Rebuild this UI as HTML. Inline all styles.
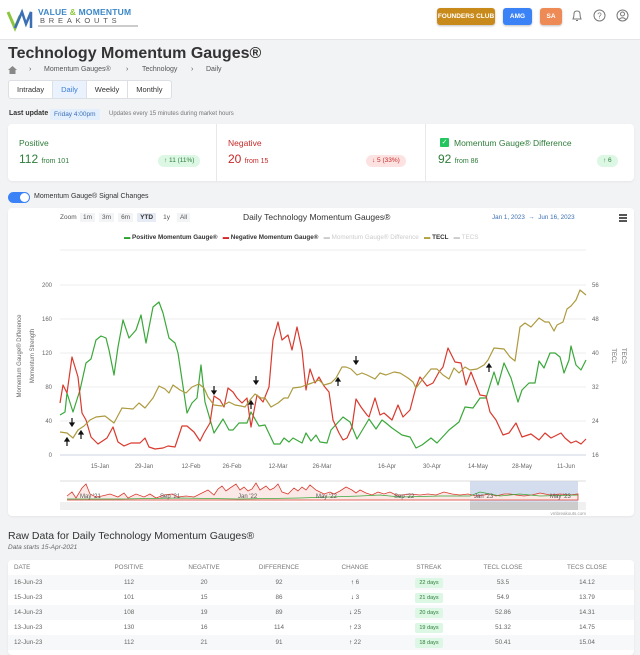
<!DOCTYPE html>
<html><head><meta charset="utf-8"><style>
*{box-sizing:border-box;margin:0;padding:0}
body{width:640px;height:648px;overflow:hidden;background:#f2f3f5;font-family:"Liberation Sans",sans-serif;color:#333;position:relative}
.a{position:absolute;white-space:nowrap}
.hdr{left:0;top:0;width:640px;height:40px;background:#fff;border-bottom:1px solid #e3e5e8}
.btn{top:8px;height:17px;border-radius:3px;color:#fff;font-size:6.5px;font-weight:bold;text-align:center;line-height:17px;box-shadow:0 1px 2px rgba(0,0,0,.25)}
.card{background:#fff;border-radius:4px;box-shadow:0 1px 2px rgba(0,0,0,.06)}
.tabs{left:8px;top:80px;height:19px;background:#fff;border:1px solid #dcdfe3;border-radius:3px;display:flex;font-size:7.5px}
.tabs div{padding:0 8px;line-height:17px;border-right:1px solid #dcdfe3}
.pill{border-radius:8px;font-size:6.5px;padding:0 6px;line-height:12px;height:12px}
table{border-collapse:collapse;width:626px;font-size:6.3px;color:#666}
td,th{text-align:center;height:15px;font-weight:normal}
th{color:#777;height:15px}
tr.alt td{background:#f7f8f9}
.sk{background:#dcf7e3;color:#2e7d3a;border-radius:2px;padding:2px 4px;font-size:5.5px}
</style></head><body>
<div class="a hdr"></div>
<svg class="a" style="left:6px;top:6px" width="30" height="26" viewBox="0 0 30 26"><path d="M2 6 L9 22 L14 10" stroke="#8cc63f" stroke-width="3" fill="none"/><path d="M9 22 L16 6 L20 18 L25 6 L25 22" stroke="#3b6fb6" stroke-width="2.5" fill="none"/></svg>
<div class="a" style="left:38px;top:7px;font-size:8.5px;color:#3b87c8;font-weight:bold;letter-spacing:.2px">VALUE <span style="color:#8cc63f">&amp;</span> MOMENTUM</div>
<div class="a" style="left:40px;top:16px;font-size:7.5px;color:#555;letter-spacing:3.8px">BREAKOUTS</div>
<div class="a" style="left:38px;top:25px;width:100px;height:2px;background:#ccc"></div>
<div class="a btn" style="left:437px;width:58px;background:#c98a1c">FOUNDERS CLUB</div>
<div class="a btn" style="left:503px;width:29px;background:#3b82f6">AMG</div>
<div class="a btn" style="left:540px;width:22px;background:#ee8a56">SA</div>
<svg class="a" style="left:571px;top:9px" width="12" height="13" viewBox="0 0 12 13"><path d="M2 10 Q3 8 3 5 Q3 2 6 2 Q9 2 9 5 Q9 8 10 10 Z M5 11.5 H7" stroke="#777" fill="none"/></svg>
<svg class="a" style="left:593px;top:9px" width="13" height="13"><circle cx="6.5" cy="6.5" r="5.5" stroke="#777" fill="none"/><text x="6.5" y="9.5" font-size="8" text-anchor="middle" fill="#777" font-family="Liberation Sans">?</text></svg>
<svg class="a" style="left:616px;top:9px" width="13" height="13"><circle cx="6.5" cy="6.5" r="5.5" stroke="#777" fill="none"/><circle cx="6.5" cy="5" r="2" stroke="#777" fill="none"/><path d="M3 10.5 Q6.5 7 10 10.5" stroke="#777" fill="none"/></svg>

<div class="a" style="left:8px;top:45px;font-size:16px;font-weight:bold;color:#333">Technology Momentum Gauges®</div>
<svg class="a" style="left:8px;top:66px" width="9" height="8"><path d="M0 4 L4.5 0 L9 4 H7.5 V8 H1.5 V4Z" fill="#888"/></svg>
<div class="a" style="left:29px;top:66px;font-size:7px;color:#555">›</div>
<div class="a" style="left:44px;top:66px;font-size:7px;color:#555">Momentum Gauges®</div>
<div class="a" style="left:126px;top:66px;font-size:7px;color:#555">›</div>
<div class="a" style="left:142px;top:66px;font-size:7px;color:#555">Technology</div>
<div class="a" style="left:191px;top:66px;font-size:7px;color:#555">›</div>
<div class="a" style="left:206px;top:66px;font-size:7px;color:#555">Daily</div>
<div class="a tabs"><div>Intraday</div><div style="background:#eaf2fd;color:#3b7ddd">Daily</div><div>Weekly</div><div style="border:none">Monthly</div></div>
<div class="a" style="left:9px;top:110px;font-size:7px;font-weight:bold;color:#333">Last update</div>
<div class="a" style="left:50px;top:109px;font-size:6.5px;background:#e3effd;color:#3b6fb6;padding:0 4px;line-height:11px;border-radius:2px">Friday 4:00pm</div>
<div class="a" style="left:109px;top:111px;font-size:6px;color:#777">Updates every 15 minutes during market hours</div>

<div class="a card" style="left:8px;top:124px;width:626px;height:57px"></div>
<div class="a" style="left:216px;top:124px;width:1px;height:57px;background:#e6e8eb"></div>
<div class="a" style="left:425px;top:124px;width:1px;height:57px;background:#e6e8eb"></div>
<div class="a" style="left:19px;top:138px;font-size:8.5px;color:#2e7d3a">Positive</div>
<div class="a" style="left:19px;top:152px;font-size:12px;color:#2e7d3a">112 <span style="font-size:7px">from 101</span></div>
<div class="a pill" style="left:158px;top:155px;background:#dcf7e3;color:#2e7d3a">↑ 11 (11%)</div>
<div class="a" style="left:228px;top:138px;font-size:8.5px;color:#c62828">Negative</div>
<div class="a" style="left:228px;top:152px;font-size:12px;color:#c62828">20 <span style="font-size:7px">from 15</span></div>
<div class="a pill" style="left:366px;top:155px;background:#fde2e2;color:#c62828">↓ 5 (33%)</div>
<div class="a" style="left:440px;top:138px;width:9px;height:9px;background:#22c55e;border-radius:1px;color:#fff;font-size:7px;line-height:9px;text-align:center">✓</div>
<div class="a" style="left:454px;top:138px;font-size:8.5px;color:#2e7d3a">Momentum Gauge® Difference</div>
<div class="a" style="left:438px;top:152px;font-size:12px;color:#2e7d3a">92 <span style="font-size:7px">from 86</span></div>
<div class="a pill" style="left:597px;top:155px;background:#dcf7e3;color:#2e7d3a">↑ 6</div>

<div class="a" style="left:8px;top:192px;width:22px;height:11px;background:#3b82f6;border-radius:6px"></div>
<div class="a" style="left:20px;top:193px;width:9px;height:9px;background:#fff;border-radius:50%"></div>
<div class="a" style="left:34px;top:193px;font-size:7px;color:#333">Momentum Gauge® Signal Changes</div>

<div class="a card" style="left:8px;top:208px;width:626px;height:308px"></div>
<div class="a" style="left:60px;top:214px;font-size:6.5px;color:#555">Zoom</div>
<div class="a" style="left:80px;top:213px;font-size:6.5px;color:#555;display:flex;gap:4px">
<span style="background:#f3f4f6;padding:1px 3px">1m</span><span style="background:#f3f4f6;padding:1px 3px">3m</span><span style="background:#f3f4f6;padding:1px 3px">6m</span><span style="background:#e6ebf5;padding:1px 3px;font-weight:bold;color:#333">YTD</span><span style="padding:1px 3px">1y</span><span style="background:#f3f4f6;padding:1px 3px">All</span></div>
<div class="a" style="left:243px;top:212px;font-size:8.5px;color:#333">Daily Technology Momentum Gauges®</div>
<div class="a" style="left:492px;top:214px;font-size:6.3px;color:#3b6fb6">Jan 1, 2023 &nbsp;→&nbsp; Jun 16, 2023</div>
<div class="a" style="left:619px;top:214px;width:8px;height:1.5px;background:#555;box-shadow:0 3px 0 #555,0 6px 0 #555"></div>
<div class="a" style="left:124px;top:234px;font-size:6.3px;color:#333;font-weight:bold">
<span style="color:#2ca02c">▬</span> Positive Momentum Gauge® &nbsp; <span style="color:#d62728">▬</span> Negative Momentum Gauge® &nbsp; <span style="color:#ccc;font-weight:normal">▬ Momentum Gauge® Difference</span> &nbsp; <span style="color:#b0a040">▬</span> TECL &nbsp; <span style="color:#ccc;font-weight:normal">▬ TECS</span></div>

<svg class="a" style="left:8px;top:240px" width="626" height="276" viewBox="8 240 626 276" font-family="Liberation Sans" font-size="6" fill="#666">
<g stroke="#e6e6e6" stroke-width="0.8"><line x1="60" x2="586" y1="250" y2="250"/><line x1="60" x2="586" y1="285" y2="285"/><line x1="60" x2="586" y1="319" y2="319"/><line x1="60" x2="586" y1="353" y2="353"/><line x1="60" x2="586" y1="387" y2="387"/><line x1="60" x2="586" y1="421" y2="421"/></g>
<line x1="60" x2="586" y1="455" y2="455" stroke="#cdd3e0"/>
<g text-anchor="end"><text x="52" y="287">200</text><text x="52" y="321">160</text><text x="52" y="355">120</text><text x="52" y="389">80</text><text x="52" y="423">40</text><text x="52" y="457">0</text></g>
<g><text x="592" y="287">56</text><text x="592" y="321">48</text><text x="592" y="355">40</text><text x="592" y="389">32</text><text x="592" y="423">24</text><text x="592" y="457">16</text></g>
<text transform="translate(21 356) rotate(-90)" text-anchor="middle">Momentum Gauge® Difference</text>
<text transform="translate(34 356) rotate(-90)" text-anchor="middle">Momentum Strength</text>
<text transform="translate(612 356) rotate(90)" text-anchor="middle">TECL</text>
<text transform="translate(622 356) rotate(90)" text-anchor="middle">TECS</text>
<g text-anchor="middle"><text x="100" y="468">15-Jan</text><text x="144" y="468">29-Jan</text><text x="191" y="468">12-Feb</text><text x="232" y="468">26-Feb</text><text x="278" y="468">12-Mar</text><text x="322" y="468">26-Mar</text><text x="387" y="468">16-Apr</text><text x="432" y="468">30-Apr</text><text x="478" y="468">14-May</text><text x="522" y="468">28-May</text><text x="566" y="468">11-Jun</text></g>
<g fill="none" stroke-width="1.2" stroke-linejoin="round">
<polyline stroke="#3aa83a" points="60,415 65,412 67,393 73,412 80,390 86,363 91,359 96,340 101,336 106,338 109,350 114,375 118,347 123,320 129,338 136,330 141,315 146,343 153,307 159,302 163,313 169,338 175,343 178,353 187,413 192,403 197,398 201,365 205,402 214,433 223,419 229,430 233,430 239,423 247,423 251,412 259,426 265,425 274,444 280,444 284,438 289,442 293,438 302,443 306,433 311,441 316,435 320,442 327,443 331,430 343,417 350,422 357,439 369,419 376,429 382,420 386,423 392,428 402,435 410,437 416,448 422,445 431,438 437,443 449,430 459,422 465,407 473,408 480,398 486,398 494,372 498,385 504,363 511,378 518,402 522,390 529,383 535,383 539,361 544,368 550,353 555,353 560,357 564,373 569,360 571,346 576,365 581,370 586,360"/>
<polyline stroke="#d93a2e" points="60,403 63,385 67,393 72,357 78,377 82,413 86,420 91,437 98,444 107,438 113,427 118,442 124,446 131,443 140,443 145,438 149,447 155,449 163,448 168,446 175,447 182,426 187,426 194,432 200,441 204,433 210,423 214,396 220,400 224,407 228,388 233,392 237,398 242,403 247,398 251,427 257,395 263,402 269,387 273,340 278,322 282,340 288,335 292,350 297,327 302,350 306,390 310,369 315,383 319,377 324,386 329,392 333,420 339,433 343,440 347,438 352,427 356,399 361,407 367,415 369,417 375,398 380,415 384,413 392,420 398,405 403,417 410,410 416,387 420,377 427,386 433,383 439,372 443,367 448,348 455,362 461,363 466,385 471,372 480,395 486,396 490,412 496,420 503,435 509,433 516,423 522,437 531,434 539,440 545,433 551,438 561,433 565,438 571,443 576,441 581,444 586,439"/>
<polyline stroke="#ad9a3f" points="60,432 67,433 73,438 78,430 84,426 90,420 96,417 105,416 114,423 122,408 133,409 139,403 145,408 153,398 159,386 165,389 169,393 173,385 180,390 186,393 192,387 199,384 204,388 208,397 214,405 222,406 229,402 235,405 241,406 245,407 250,400 255,394 261,398 265,398 271,407 278,403 284,398 288,398 293,388 301,387 306,385 312,383 319,380 324,385 331,383 336,378 342,367 346,367 351,369 357,375 362,373 367,375 375,379 380,373 386,375 394,372 400,373 408,378 413,382 416,388 422,380 431,369 437,369 443,375 449,379 454,368 459,373 465,367 470,370 477,369 484,365 488,360 494,348 504,349 510,357 515,361 520,327 525,323 531,327 539,318 545,322 549,322 554,331 557,325 563,322 567,309 571,306 576,300 580,290 586,295"/>
</g>
<g stroke="#111" stroke-width="1.2" fill="#111">
<path d="M72 418v7"/><path d="M70 423l2 3 2-3z"/>
<path d="M67 446v-7"/><path d="M65 441l2-3 2 3z"/>
<path d="M81 439v-7"/><path d="M79 434l2-3 2 3z"/>
<path d="M214 386v7"/><path d="M212 391l2 3 2-3z"/>
<path d="M251 409v-7"/><path d="M249 404l2-3 2 3z"/>
<path d="M256 376v7"/><path d="M254 381l2 3 2-3z"/>
<path d="M338 386v-7"/><path d="M336 381l2-3 2 3z"/>
<path d="M356 356v7"/><path d="M354 361l2 3 2-3z"/>
<path d="M489 372v-7"/><path d="M487 367l2-3 2 3z"/>
</g>
<line x1="60" x2="586" y1="481" y2="481" stroke="#ddd"/>
<rect x="470" y="481" width="108" height="28" fill="#c9d4ea" opacity=".8"/>
<polyline fill="#fbe9e7" stroke="#d93a2e" stroke-width=".8" points="67,496 72,492 76,498 82,488 86,484 90,494 96,497 102,496 110,494 118,497 124,493 128,498 136,494 144,497 150,494 156,498 164,495 172,494 178,497 186,496 194,497 202,493 208,490 214,495 218,489 222,486 226,491 230,488 236,484 240,490 244,487 248,491 252,489 256,483 260,490 266,486 270,490 274,488 278,484 282,492 288,494 294,488 298,491 302,487 306,490 310,485 316,490 320,492 324,494 330,492 334,494 340,491 346,487 352,490 356,493 360,490 366,493 372,495 378,492 384,494 390,492 396,495 402,495 410,494 420,495 428,494 436,495 444,492 452,494 460,495 468,494 476,496 484,495 490,494 496,496 504,494 510,494 516,495 524,496 532,495 540,493 550,495 560,494 570,495 578,494 578,500 67,500"/>
<polyline fill="none" stroke="#3aa83a" stroke-width=".8" points="67,499 120,499 180,498 240,499 300,498 360,496 380,495 400,497 440,496 470,496 480,492 490,494 500,496 520,494 540,496 578,495"/>
<g font-size="6" fill="#555"><text x="80" y="498">May '21</text><text x="160" y="498">Sep '21</text><text x="238" y="498">Jan '22</text><text x="316" y="498">May '22</text><text x="394" y="498">Sep '22</text><text x="474" y="498">Jan '23</text><text x="550" y="498">May '23</text></g>
<rect x="60" y="502" width="526" height="8" fill="#f0f0f0"/>
<rect x="470" y="502" width="108" height="8" fill="#ccc"/>
<text x="586" y="515" font-size="4.5" fill="#999" text-anchor="end" >vmbreakouts.com</text>
</svg>

<div class="a" style="left:8px;top:530px;font-size:10.5px;color:#333">Raw Data for Daily Technology Momentum Gauges®</div>
<div class="a" style="left:8px;top:544px;font-size:6.5px;color:#666;font-style:italic">Data starts 15-Apr-2021</div>
<div class="a card" style="left:8px;top:560px;width:626px;height:95px"></div>
<table class="a" style="left:8px;top:560px">
<colgroup><col style="width:82px"><col style="width:78px"><col style="width:72px"><col style="width:78px"><col style="width:74px"><col style="width:74px"><col style="width:74px"><col style="width:94px"></colgroup>
<tr><th style="text-align:left;padding-left:6px">DATE</th><th>POSITIVE</th><th>NEGATIVE</th><th>DIFFERENCE</th><th>CHANGE</th><th>STREAK</th><th>TECL CLOSE</th><th>TECS CLOSE</th></tr>
<tr class="alt"><td style="text-align:left;padding-left:6px">16-Jun-23</td><td>112</td><td>20</td><td>92</td><td><b style="color:#222">↑</b> 6</td><td><span class="sk">22 days</span></td><td>53.5</td><td>14.12</td></tr>
<tr><td style="text-align:left;padding-left:6px">15-Jun-23</td><td>101</td><td>15</td><td>86</td><td><b style="color:#222">↓</b> 3</td><td><span class="sk">21 days</span></td><td>54.9</td><td>13.79</td></tr>
<tr class="alt"><td style="text-align:left;padding-left:6px">14-Jun-23</td><td>108</td><td>19</td><td>89</td><td><b style="color:#222">↓</b> 25</td><td><span class="sk">20 days</span></td><td>52.86</td><td>14.31</td></tr>
<tr><td style="text-align:left;padding-left:6px">13-Jun-23</td><td>130</td><td>16</td><td>114</td><td><b style="color:#222">↑</b> 23</td><td><span class="sk">19 days</span></td><td>51.32</td><td>14.75</td></tr>
<tr class="alt"><td style="text-align:left;padding-left:6px">12-Jun-23</td><td>112</td><td>21</td><td>91</td><td><b style="color:#222">↑</b> 22</td><td><span class="sk">18 days</span></td><td>50.41</td><td>15.04</td></tr>
</table>
</body></html>
